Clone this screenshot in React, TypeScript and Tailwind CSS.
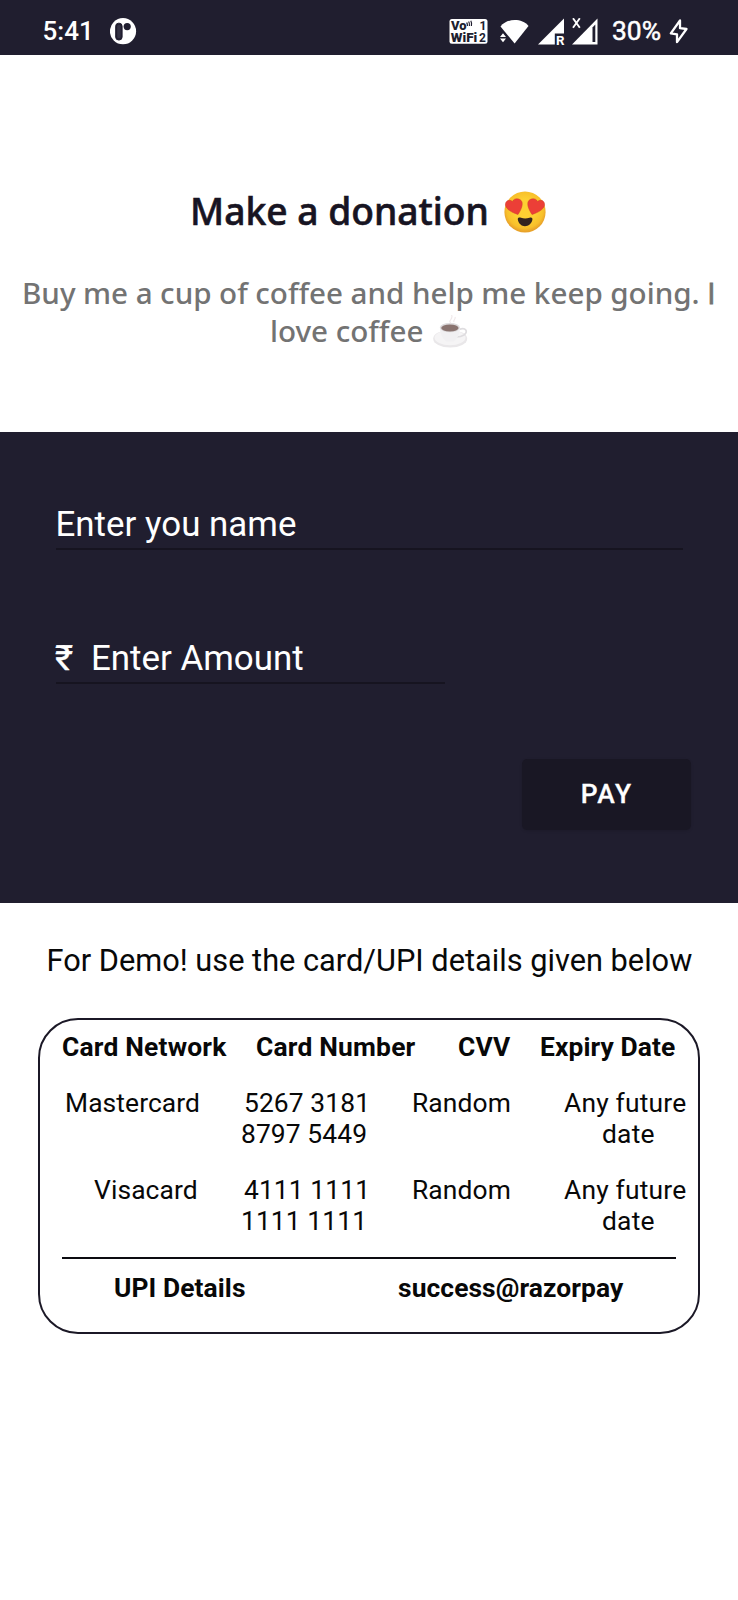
import React from "react";

function StatusBar() {
  return (
    <header className="flex h-[54.500px] items-start bg-[#201e2f] pt-[16px] pl-[42.500px] text-white">
      <span className="w-[67.500px] whitespace-nowrap text-[26px] leading-[30px] font-medium">5:41</span>
      <svg className="mt-[2px] h-[27px] w-[27px]" viewBox="0 0 27 27">
        <circle cx="13" cy="13.2" r="13.1" fill="#fff" />
        <rect x="5.7" y="5.2" width="6.4" height="16.8" rx="3" fill="#201e2f" stroke="#201e2f" />
        <rect x="7.2" y="6.7" width="3.4" height="13.6" rx="1.6" fill="#343244" />
        <circle cx="17.2" cy="8.6" r="3.6" fill="#201e2f" />
      </svg>
      <svg className="mt-[2px] ml-[312px] h-[28px] w-[39px]" viewBox="0 0 39 28">
        <rect x="0.5" y="1" width="38" height="24.8" rx="2.5" fill="#fff" />
        <g fill="#201e2f" fontFamily="Roboto, sans-serif" fontWeight="900">
          <text x="2" y="12.4" fontSize="12" textLength="15.5" lengthAdjust="spacingAndGlyphs">Vo</text>
          <text x="1.8" y="24.2" fontSize="12" textLength="26.5" lengthAdjust="spacingAndGlyphs">WiFi</text>
          <text x="30.5" y="12.4" fontSize="12" fontWeight="700">1</text>
          <text x="30" y="24.2" fontSize="12" fontWeight="700">2</text>
        </g>
        <path d="M17.600 4.500q1 1.200 .8 3.500M19.600 3.500q1.200 1.600 .8 4.500M21.800 2.800q1.200 2 .6 5.200" stroke="#201e2f" strokeWidth="1.200" fill="none" />
      </svg>
      <svg className="mt-[2px] ml-[11px] h-[28px] w-[30px]" viewBox="0 0 30 28" fill="#fff">
        <path d="M1.500 8.500C8 0 23 0 29.500 8L15.600 25.500Z" />
        <path d="M1 19l3-3.700 3 3.700zM1 20.600h6l-3 3.700z" />
      </svg>
      <svg className="mt-[2px] ml-[9px] h-[28px] w-[27px]" viewBox="0 0 27 28">
        <path d="M0 26.500L26 .500V15.500H16.800V26.500Z" fill="#fff" />
        <text x="18" y="26.500" fontSize="13.500" fontWeight="700" fontFamily="Roboto, sans-serif" fill="#fff" textLength="8.500" lengthAdjust="spacingAndGlyphs">R</text>
      </svg>
      <svg className="mt-[2px] ml-[7px] h-[28px] w-[26px]" viewBox="0 0 26 28">
        <path d="M0 26.500L25.500 .500V26.500Z" fill="#fff" />
        <path d="M20.500 9.500L23.300 6.500V24H20.500Z" fill="#201e2f" />
        <path d="M1 .3L7.800 9.800M7.800 .3L1 9.800" stroke="#fff" strokeWidth="1.900" />
      </svg>
      <span className="ml-[14px] w-[57px] whitespace-nowrap text-[26.400px] leading-[30px] [-webkit-text-stroke:0.500px_white]">30%</span>
      <svg className="mt-[2px] h-[28px] w-[20px]" viewBox="0 0 20 28">
        <path d="M11 2.500L1.800 15.300L8 16.300L8 24.200L17.500 11L11 10.200Z" fill="none" stroke="#fff" strokeWidth="2.300" strokeLinejoin="round" />
      </svg>
    </header>
  );
}

function HeartEyes() {
  return (
    <svg className="mt-[12px] ml-[14.500px] h-[42px] w-[42px] shrink-0" viewBox="0 0 42 42">
      <defs>
        <radialGradient id="face" cx="50%" cy="45%" r="52%">
          <stop offset="0.500" stopColor="#fdd032" />
          <stop offset="0.850" stopColor="#f8c02b" />
          <stop offset="1" stopColor="#e9a32a" />
        </radialGradient>
      </defs>
      <circle cx="21" cy="21" r="20.600" fill="url(#face)" />
      <g fill="#ec3f37" stroke="#cf3a2b" strokeWidth="0.500">
        <path d="M14 23.500C8 21.500 2.500 18.500 1.500 14.500C.8 10 5 7.800 8.500 10.500C10 6.500 16.500 7 18 11C19 15 16.500 19.500 14 23.500Z" />
        <path d="M28 23.500C34 21.500 39.500 18.500 40.500 14.500C41.200 10 37 7.800 33.500 10.500C32 6.500 25.500 7 24 11C23 15 25.500 19.500 28 23.500Z" />
      </g>
      <path d="M13.800 28.500C13.500 26.500 15.500 26.300 17 26.800Q21 28 25.500 26.800C27.500 26.300 28.700 26.800 28.400 28.800C27.500 33 24.500 35.200 21 35.200S14.500 32.500 13.800 28.500Z" fill="#33241f" />
    </svg>
  );
}

function CoffeeCup() {
  return (
    <svg className="mt-[3px] ml-[11px] h-[34px] w-[35px] shrink-0" viewBox="0 0 35 34">
      <ellipse cx="17.200" cy="23.800" rx="17" ry="8.800" fill="#e9e7e9" />
      <ellipse cx="17" cy="22.800" rx="15.500" ry="7.400" fill="#f5f4f5" />
      <path d="M26 14.500C33 11.500 35.500 17 31 20C28.500 21.500 25.500 22 24 22" fill="none" stroke="#dedcdf" strokeWidth="1.700" />
      <path d="M7 13C7 19 10 24.500 13.500 26.500H20.500C24.500 24 26.800 19 26.800 13Z" fill="#f1f0f2" />
      <ellipse cx="16.900" cy="12.600" rx="10" ry="4.700" fill="#dddbdd" />
      <ellipse cx="16.900" cy="13" rx="8.700" ry="3.500" fill="#8a7470" />
      <path d="M18 8C14 6 21 4 18.500 0M21 7C20 5 23 4 22 2" fill="none" stroke="#f0e9eb" strokeWidth="1.200" />
    </svg>
  );
}

function Intro() {
  return (
    <section className="h-[377px] pt-[124px] font-['Noto_Sans',sans-serif]">
      <h1 className="flex h-[64px] pl-[190px] text-[#171422]">
        <span className="w-[299px] whitespace-nowrap text-[37.200px] leading-[64px] font-medium [-webkit-text-stroke:0.600px_#171422]">Make a donation</span>
        <HeartEyes />
      </h1>
      <div className="mt-[31px] text-[29.600px] leading-[38px] font-medium text-[#737373]">
        <p className="pl-[22px] whitespace-nowrap [word-spacing:-0.150px]">
          Buy me a cup of coffee and help me keep going. <span className="font-['Open_Sans',sans-serif] leading-none [-webkit-text-stroke:0.900px_#737373]">I</span>
        </p>
        <p className="flex pl-[270px]">
          <span className="w-[152px] whitespace-nowrap">love coffee</span>
          <CoffeeCup />
        </p>
      </div>
    </section>
  );
}

function DonationForm() {
  return (
    <form className="flex h-[471px] flex-col items-start bg-[#201e2f] pt-[71.500px] pl-[56px] text-[34.900px] text-white">
      <div className="h-[47px] w-[626.500px] border-b-2 border-[#161420] leading-[43px] whitespace-nowrap -indent-[0.500px]">Enter you name</div>
      <div className="mt-[87px] flex h-[47px] w-[389px] border-b-2 border-[#161420] leading-[43px] whitespace-nowrap">
        <span className="-ml-px w-[36px] [-webkit-text-stroke:0.400px_white]">₹</span>
        <span>Enter Amount</span>
      </div>
      <button type="button" className="mt-[75px] ml-[465.500px] h-[71px] w-[169.500px] rounded-[5px] bg-[#191724] pl-px text-[26.400px] leading-[71px] font-medium tracking-[1.700px] shadow-[0_1px_3px_rgba(0,0,0,0.12)] [-webkit-text-stroke:0.300px_white]">PAY</button>
    </form>
  );
}

function CardRow({ name, inset, first, second }: { name: string; inset: string; first: string; second: string }) {
  return (
    <div className="grid h-[87px] grid-cols-[174px_169px_150px_130px] pl-[24px] tracking-[0.100px] whitespace-nowrap">
      <span className={inset}>{name}</span>
      <div className="pl-[3px]">
        <div className="pl-[3px]">{first}</div>
        <div>{second}</div>
      </div>
      <span className="pl-[5px]">Random</span>
      <div className="w-[126px] pl-[7px] tracking-[0.200px]">
        <div>Any future</div>
        <div className="pl-[38px]">date</div>
      </div>
    </div>
  );
}

function DemoDetails() {
  return (
    <section className="flex flex-col items-start pt-[38.500px] text-[#080808]">
      <p className="pl-[46.500px] text-[30.750px] leading-[40px] whitespace-nowrap">For Demo! use the card/UPI details given below</p>
      <div className="mt-[37px] ml-[38px] h-[315.500px] w-[662px] rounded-[40px] border-2 border-[#1b1826] text-[26.400px] leading-[31px]">
        <div className="flex pt-[12px] font-bold tracking-[0.200px] whitespace-nowrap">
          <span className="ml-[22px] w-[194px]">Card Network</span>
          <span className="w-[202px]">Card Number</span>
          <span className="w-[82px]">CVV</span>
          <span className="tracking-[0.100px]">Expiry Date</span>
        </div>
        <div className="h-[194px] pt-[25px]">
          <CardRow name="Mastercard" inset="pl-px" first="5267 3181" second="8797 5449" />
          <CardRow name="Visacard" inset="pl-[30px]" first="4111 1111" second="1111 1111" />
        </div>
        <div className="ml-[22px] h-[2px] w-[614px] bg-[#0c0b10]" />
        <div className="flex pt-[14px] font-bold tracking-[0.080px] whitespace-nowrap">
          <span className="ml-[74px] w-[284px]">UPI Details</span>
          <span>success@razorpay</span>
        </div>
      </div>
    </section>
  );
}

export default function App() {
  return (
    <main className="h-[1600px] w-[738px] overflow-hidden bg-white font-[Roboto,sans-serif]">
      <StatusBar />
      <Intro />
      <DonationForm />
      <DemoDetails />
    </main>
  );
}
